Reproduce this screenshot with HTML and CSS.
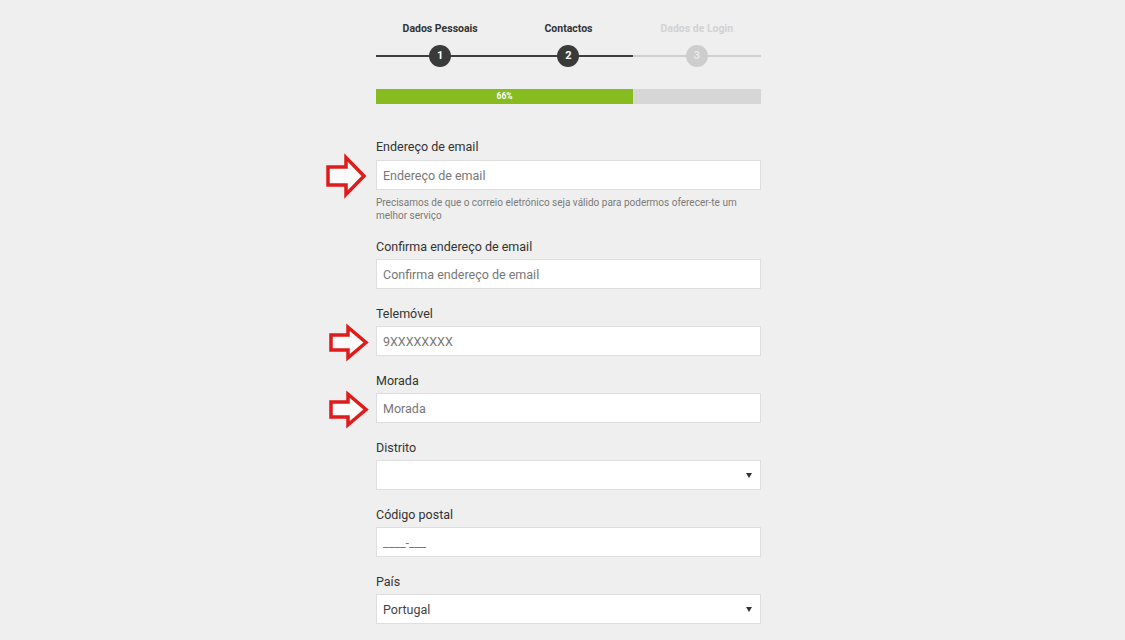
FILE: index.html
```html
<!DOCTYPE html>
<html lang="pt">
<head>
<meta charset="utf-8">
<link rel="stylesheet" href="styles.css">
</head>
<body>
<div class="page">
  <div class="steps">
    <div class="step done">
      <div class="step-label">Dados Pessoais</div>
      <div class="step-track"><span class="step-num">1</span></div>
    </div>
    <div class="step done">
      <div class="step-label">Contactos</div>
      <div class="step-track"><span class="step-num">2</span></div>
    </div>
    <div class="step todo">
      <div class="step-label">Dados de Login</div>
      <div class="step-track"><span class="step-num">3</span></div>
    </div>
  </div>

  <div class="progress"><div class="progress-fill" style="width:66.8%">66%</div></div>

  <form class="form">
    <div class="field field-first">
      <label class="label">Endereço de email</label>
      <div class="control">
        <svg class="arrow" viewBox="0 0 40 42"><path d="M2 12H20V2.5L38 21L20 39.5V30H2Z"/></svg>
        <input class="input" type="text" placeholder="Endereço de email">
      </div>
      <p class="help">Precisamos de que o correio eletrónico seja válido para podermos oferecer-te um melhor serviço</p>
    </div>
    <div class="field">
      <label class="label">Confirma endereço de email</label>
      <div class="control"><input class="input" type="text" placeholder="Confirma endereço de email"></div>
    </div>
    <div class="field">
      <label class="label">Telemóvel</label>
      <div class="control">
        <svg class="arrow arrow-sm" viewBox="0 0 39 35"><path d="M2 10H19V2.2L37 17.5L19 32.8V25H2Z"/></svg>
        <input class="input" type="text" placeholder="9XXXXXXXX">
      </div>
    </div>
    <div class="field">
      <label class="label">Morada</label>
      <div class="control">
        <svg class="arrow arrow-sm" viewBox="0 0 39 35"><path d="M2 10H19V2.2L37 17.5L19 32.8V25H2Z"/></svg>
        <input class="input" type="text" placeholder="Morada">
      </div>
    </div>
    <div class="field">
      <label class="label">Distrito</label>
      <div class="control select"><span class="select-value"></span><span class="caret"></span></div>
    </div>
    <div class="field">
      <label class="label">Código postal</label>
      <div class="control"><input class="input" type="text" placeholder="____-___"></div>
    </div>
    <div class="field">
      <label class="label">País</label>
      <div class="control select"><span class="select-value">Portugal</span><span class="caret"></span></div>
    </div>
  </form>
</div>
</body>
</html>
```

FILE: styles.css
```css
* { box-sizing: border-box; }
html, body { margin: 0; padding: 0; }
body {
  background: #efefef;
  font-family: Roboto, "Liberation Sans", Arial, sans-serif;
  color: #333;
  overflow: hidden;
}
.page {
  width: 385px;
  margin-left: 376px;
  padding-top: 22px;
}
.steps {
  display: flex;
}
.step {
  flex: 1 1 0;
  display: flex;
  flex-direction: column;
  align-items: center;
}
.step-label {
  font-size: 10.5px;
  font-weight: 700;
  line-height: 13px;
  height: 13px;
  color: #333;
}
.step.todo .step-label { color: #d2d2d2; }
.step-track {
  position: relative;
  width: 100%;
  height: 22px;
  margin-top: 10px;
  display: flex;
  justify-content: center;
}
.step-track::before {
  content: "";
  position: absolute;
  left: 0;
  right: 0;
  top: 10px;
  height: 2px;
  background: #3f3f3f;
}
.step.todo .step-track::before { background: #cfcfcf; }
.step-num {
  position: relative;
  width: 22px;
  height: 22px;
  border-radius: 50%;
  background: #3a3a3a;
  color: #fff;
  font-size: 11px;
  font-weight: 700;
  line-height: 22px;
  text-align: center;
}
.step.todo .step-num { background: #cdcdcd; color: #e8e8e8; }

.progress {
  margin-top: 22px;
  height: 15px;
  background: #d6d6d6;
}
.progress-fill {
  height: 100%;
  background: #86bc1f;
  color: #fff;
  font-size: 8.5px;
  font-weight: 700;
  line-height: 15px;
  text-align: center;
}

.form { margin-top: 34px; }
.field { margin-bottom: 16px; }
.label {
  display: block;
  font-size: 12.5px;
  line-height: 18px;
  color: #333;
  margin-bottom: 3px;
}
.field-first .label { margin-bottom: 4px; }
.control {
  position: relative;
  height: 30px;
}
.input, .select {
  display: block;
  width: 100%;
  height: 30px;
  border: 1px solid #dedede;
  background: #fff;
  padding: 0 6px;
  font-family: Roboto, "Liberation Sans", Arial, sans-serif;
  font-size: 12.5px;
  color: #555;
  outline: none;
}
.input::placeholder { color: #777; }
.select {
  display: flex;
  align-items: center;
  justify-content: space-between;
  padding-right: 8px;
}
.select-value { color: #444; }
.caret {
  width: 0;
  height: 0;
  border-left: 3.5px solid transparent;
  border-right: 3.5px solid transparent;
  border-top: 5px solid #333;
}
.help {
  margin: 6px 0 0;
  padding-bottom: 0;
  font-size: 10px;
  line-height: 13px;
  color: #7a7a7a;
}
.arrow {
  position: absolute;
  left: -50px;
  top: -5px;
  width: 40px;
  height: 42px;
  overflow: visible;
}
.arrow path {
  fill: #fbfbfb;
  stroke: #e01b1b;
  stroke-width: 3.5;
  stroke-linejoin: miter;
}
.arrow-sm {
  left: -47px;
  top: -1px;
  width: 39px;
  height: 35px;
}
```
